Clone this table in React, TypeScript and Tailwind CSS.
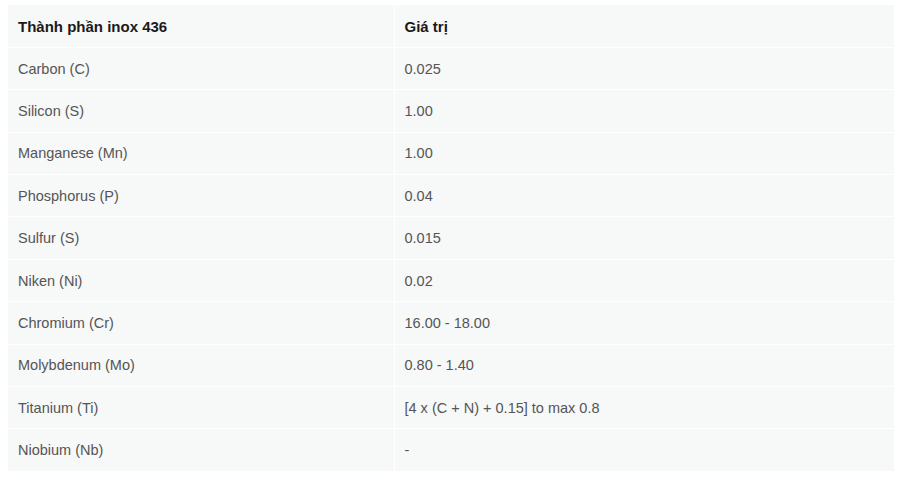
import React from 'react';

const rows: [string, string][] = [
  ['Carbon (C)', '0.025'],
  ['Silicon (S)', '1.00'],
  ['Manganese (Mn)', '1.00'],
  ['Phosphorus (P)', '0.04'],
  ['Sulfur (S)', '0.015'],
  ['Niken (Ni)', '0.02'],
  ['Chromium (Cr)', '16.00 - 18.00'],
  ['Molybdenum (Mo)', '0.80 - 1.40'],
  ['Titanium (Ti)', '[4 x (C + N) + 0.15] to max 0.8'],
  ['Niobium (Nb)', '-'],
];

const App = () => {
  return (
    <div className="min-h-screen bg-white pt-[5px] pl-[8px] pr-[10px]" style={{ fontFamily: '"Liberation Sans", Arial, sans-serif' }}>
      <table className="w-[886px] border-collapse bg-[#f7f8f8] text-[14.5px]">
        <thead>
          <tr className="h-[42.4px]">
            <th className="w-[386px] border-r border-b border-white px-[10px] pt-[2px] text-left text-[15px] font-bold text-[#1a1a1a]">
              Thành phần inox 436
            </th>
            <th className="border-b border-white px-[10px] pt-[2px] text-left text-[15px] font-bold text-[#1a1a1a]">Giá trị</th>
          </tr>
        </thead>
        <tbody>
          {rows.map(([name, value], i) => (
            <tr key={name} className={`h-[42.4px] ${i < rows.length - 1 ? 'border-b border-white' : ''}`}>
              <td className="border-r border-white px-[10px] pt-[2px] text-[#555]">{name}</td>
              <td className="px-[10px] pt-[2px] text-[#555]">{value}</td>
            </tr>
          ))}
        </tbody>
      </table>
    </div>
  );
};

export default App;
